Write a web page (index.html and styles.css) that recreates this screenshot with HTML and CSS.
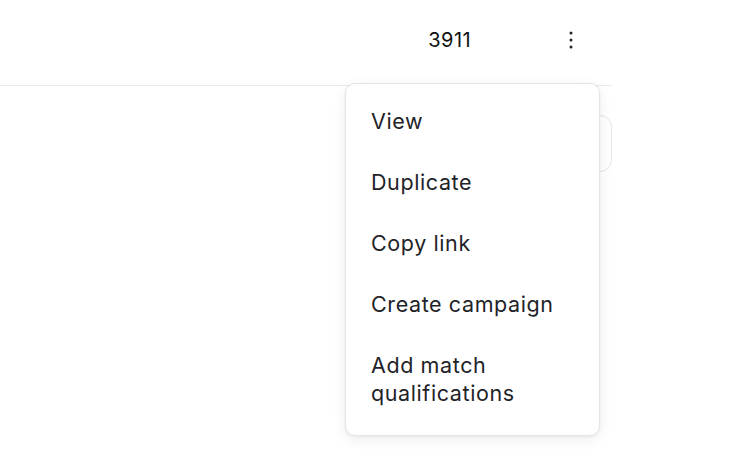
FILE: index.html
```html
<!DOCTYPE html>
<html lang="en">
<head>
<meta charset="utf-8">
<title>Menu</title>
<link rel="stylesheet" href="styles.css">
</head>
<body>
<div class="page">
  <div class="table">
    <div class="row">
      <div class="cell-num">3911</div>
      <button class="kebab" aria-label="More actions">
        <svg width="4" height="18" viewBox="0 0 4 18"><circle cx="2" cy="2" r="1.5"/><circle cx="2" cy="9" r="1.5"/><circle cx="2" cy="16" r="1.5"/></svg>
      </button>
    </div>
    <div class="toolbar">
      <div class="ghost-btn"></div>
    </div>
  </div>
  <ul class="menu">
    <li class="menu-item">View</li>
    <li class="menu-item">Duplicate</li>
    <li class="menu-item">Copy link</li>
    <li class="menu-item">Create campaign</li>
    <li class="menu-item">Add match<br>qualifications</li>
  </ul>
</div>
</body>
</html>
```
FILE: styles.css
```css
* { box-sizing: border-box; }
html, body {
  margin: 0;
  padding: 0;
  background: #ffffff;
  font-family: Inter, "Liberation Sans", sans-serif;
  color: #1f2328;
}
.page {
  position: relative;
  width: 740px;
  height: 470px;
  overflow: hidden;
}
.table {
  width: 612px;
}
.row {
  height: 86px;
  border-bottom: 1px solid #e8e9ec;
  display: flex;
  align-items: center;
  justify-content: flex-end;
  padding-right: 39px;
}
.cell-num {
  font-size: 20px;
  letter-spacing: 0.4px;
  color: #111111;
  margin-right: 98px;
  padding-bottom: 5px;
}
.kebab {
  border: 0;
  background: none;
  padding: 0;
  width: 4px;
  height: 18px;
  margin-bottom: 6px;
  display: flex;
}
.kebab svg { fill: #1f2328; }
.toolbar {
  display: flex;
  justify-content: flex-end;
  padding-top: 29px;
}
.ghost-btn {
  width: 140px;
  height: 57px;
  border: 1px solid #e4e5e8;
  border-radius: 12px;
}
.menu {
  position: absolute;
  left: 345px;
  top: 83px;
  width: 255px;
  margin: 0;
  padding: 7px 0 11px;
  list-style: none;
  background: #ffffff;
  border: 1px solid #e4e5e8;
  border-radius: 10px;
  box-shadow: 0 4px 14px rgba(0, 0, 0, 0.07), 0 1px 3px rgba(0, 0, 0, 0.05);
}
.menu-item {
  padding: 16px 20px 17px 25px;
  font-size: 21.5px;
  letter-spacing: 0.6px;
  line-height: 28px;
  font-weight: 400;
  color: #1f2328;
}
```
